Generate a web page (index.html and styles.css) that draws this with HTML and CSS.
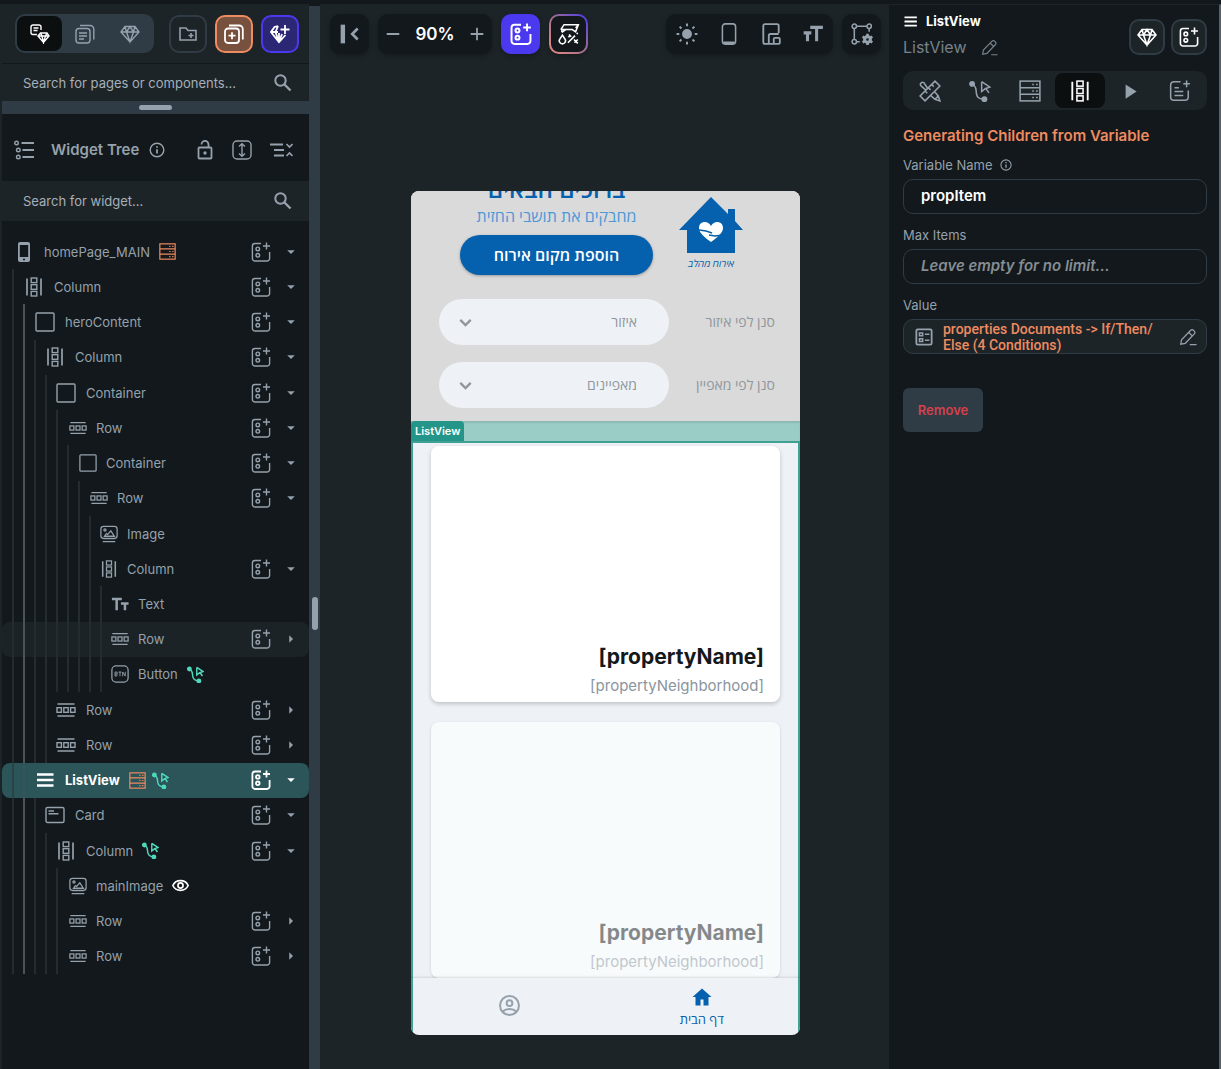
FILE: index.html
```html
<!DOCTYPE html>
<html lang="en">
<head>
    <meta charset="UTF-8">
    <meta name="viewport" content="width=device-width, initial-scale=1.0">
    <title>homePage_MAIN</title>
    <link rel="stylesheet" href="styles.css">
</head>
<body>
    <svg class="sprite" aria-hidden="true">
        <symbol id="i-search" viewBox="0 0 20 20"><circle cx="7.5" cy="7.5" r="5.2" stroke-width="2"/><path d="M11.5 11.5l6 6" stroke-width="2.4"/></symbol>
        <symbol id="i-add" viewBox="0 0 20 20"><path d="M10 1.500H4A2.600 2.600 0 0 0 1.400 4.100v12.300A2.600 2.600 0 0 0 4 19h12a2.600 2.600 0 0 0 2.600-2.600V10M15.500 .5v7M12 4h7"/><circle cx="6.800" cy="6.900" r="1.800"/><circle cx="6.800" cy="13.300" r="1.800"/></symbol>
        <symbol id="i-gem" viewBox="0 0 20 20"><path d="M5 2.500h10l4 5.500-9 10L1 8zM1 8h18M5 2.500L6.500 8 10 18l3.500-10L15 2.500M6.500 8L10 2.500 13.500 8"/></symbol>
        <symbol id="i-gemplus" viewBox="0 0 20 20"><path d="M8 2L4.500 3 1 8l8 10 6.500-7M1 8h7M8 2L5.500 8 9 18V9M9 18l3-8M15 1v9M10.500 5.500h9"/></symbol>
        <symbol id="i-pages" viewBox="0 0 20 20"><rect x="1" y="4.500" width="14" height="14.500" rx="3"/><path d="M5 1.500h10A3.500 3.500 0 0 1 18.800 5v10.500M4 9h8M4 12h8M4 15h5"/></symbol>
        <symbol id="i-pagesplus" viewBox="0 0 20 20"><rect x="1" y="4.500" width="14" height="14.500" rx="3"/><path d="M5 1.500h10A3.500 3.500 0 0 1 18.800 5v10.500M4.500 11.700h7M8 8.200v7"/></symbol>
        <symbol id="i-pagegem" viewBox="0 0 20 20"><path d="M11 6V3a2 2 0 0 0-2-2H3a2 2 0 0 0-2 2v5.500a2 2 0 0 0 2 2h4M3.500 4h5M3.500 6.500h4M10.500 9h6.500l2 3-5.500 6.500L8 12zM8 12h11M10.500 9l1.500 3 1.500 6.500 2-6.500L17 9"/></symbol>
        <symbol id="i-folder" viewBox="0 0 20 20"><path d="M2 4h6l2 2.500h8v9.500H2zM13 9v5M10.500 11.500h5"/></symbol>
        <symbol id="i-tree" viewBox="0 0 20 20"><circle cx="2.500" cy="3" r="1.800"/><circle cx="4.300" cy="10" r="1.800"/><circle cx="4.300" cy="17" r="1.800"/><path d="M7.500 3H20M8.500 10H20M8.500 17H20" stroke-width="1.800"/></symbol>
        <symbol id="i-info" viewBox="0 0 20 20"><circle cx="10" cy="10" r="8.500" stroke-width="1.800"/><path d="M10 9v5.500M10 5.200v2" stroke-width="2.200"/></symbol>
        <symbol id="i-lock" viewBox="0 0 20 20"><rect x="3.500" y="7.500" width="13" height="11" rx="1" stroke-width="1.800"/><path d="M6.500 4.500a3.500 3.500 0 0 1 7-.2v3" stroke-width="1.800"/><circle cx="10" cy="13" r="1" fill="currentColor"/></symbol>
        <symbol id="i-expand" viewBox="0 0 20 20"><rect x="1" y="1" width="18" height="18" rx="4"/><path d="M10 4v12M7 6.500L10 3.800l3 2.700M7 13.500l3 2.700 3-2.700"/></symbol>
        <symbol id="i-collapse" viewBox="0 0 24 20"><path d="M1 4.500h13M5 10h10M5 15.500h10" stroke-width="2"/><path d="M17.500 4l3 3 3-3M17.500 16l3-3 3 3" stroke-width="1.700"/></symbol>
        <symbol id="i-phone" viewBox="0 0 20 20"><path d="M6 0h8a2 2 0 0 1 2 2v16a2 2 0 0 1-2 2H6a2 2 0 0 1-2-2V2a2 2 0 0 1 2-2zm-.200 3v12h8.400V3zM9 16.800v1.400h2v-1.400z" fill="currentColor" stroke="none" fill-rule="evenodd"/></symbol>
        <symbol id="i-column" viewBox="0 0 20 20"><path d="M3 1.500v17M17 1.500v17" stroke-width="1.700"/><rect x="7.200" y="1" width="5.600" height="4.600"/><rect x="7.200" y="7.700" width="5.600" height="4.600"/><rect x="7.200" y="14.400" width="5.600" height="4.600"/></symbol>
        <symbol id="i-row" viewBox="0 0 20 20"><path d="M1.500 4h17M1.500 16h17" stroke-width="1.500"/><rect x="1" y="7.700" width="4.400" height="4.600"/><rect x="7.800" y="7.700" width="4.400" height="4.600"/><rect x="14.600" y="7.700" width="4.400" height="4.600"/></symbol>
        <symbol id="i-container" viewBox="0 0 20 20"><rect x="1" y="1" width="18" height="18" rx="1"/></symbol>
        <symbol id="i-image" viewBox="0 0 20 20"><rect x="1" y="1.500" width="18" height="13.500" rx="3"/><path d="M3 18.500h14M5 12.500h11l-4-6-3.500 4-1.500-1z"/><circle cx="5.500" cy="5.500" r="1.200"/></symbol>
        <symbol id="i-text" viewBox="0 0 20 20"><path d="M1 4.500h11M6.300 4.500V17M11 9.500h8.500M15.500 9.500V17" stroke-width="2.800"/></symbol>
        <symbol id="i-button" viewBox="0 0 20 20"><rect x="1" y="1" width="18" height="18" rx="4.500"/><path d="M4.500 7.800v4.500H6a1.200 1.200 0 0 0 0-2.300 1.100 1.100 0 0 0 0-2.200zM4.500 10H6M8.300 7.800h3.400M10 7.800v4.700M13 12.500V7.800l2.800 4.500V7.600" stroke-width="1"/></symbol>
        <symbol id="i-list" viewBox="0 0 20 20"><path d="M2 4.500h16.500M2 10h16.500M2 15.500h16.500" stroke-width="2.500"/></symbol>
        <symbol id="i-card" viewBox="0 0 20 20"><rect x="1" y="2.500" width="18" height="15" rx="1.500"/><path d="M3.500 6h5.500M3.500 8.800h10"/></symbol>
        <symbol id="i-db" viewBox="0 0 20 20"><rect x="1" y="1" width="18" height="18"/><path d="M1 7h18M1 13h18M12 4h1.500M15.500 4H17M12 10h1.500M15.500 10H17M12 16h1.500M15.500 16H17"/></symbol>
        <symbol id="i-action" viewBox="0 0 20 20"><circle cx="2.800" cy="3.500" r="2" fill="currentColor"/><circle cx="14" cy="17.500" r="2" fill="currentColor"/><path d="M3 4c4.500 2 3 5 3.800 8.500C7.500 16 9 17 13 17.500M11.500 1.500l7.500 5-3.800 1.200 3 4M15.200 7.700l-3.700 2.800v-9"/></symbol>
        <symbol id="i-eye" viewBox="0 0 20 20"><path d="M1 10c3.500-7.500 14.500-7.500 18 0-3.500 7.500-14.500 7.500-18 0z" stroke-width="2"/><circle cx="10" cy="10" r="3" stroke-width="2"/></symbol>
        <symbol id="i-first" viewBox="0 0 20 20"><path d="M3.500 1.500v17" stroke-width="4"/><path d="M17 5l-5 5 5 5" stroke-width="2.400"/></symbol>
        <symbol id="i-minus" viewBox="0 0 20 20"><path d="M3 10h14" stroke-width="2.200"/></symbol>
        <symbol id="i-plus" viewBox="0 0 20 20"><path d="M3 10h14M10 3v14" stroke-width="2"/></symbol>
        <symbol id="i-tools" viewBox="0 0 20 20"><path d="M2.500 6L5.500 1.500H18.500L16 8 13 6H3.500V8.500M3.500 8.500L7 6M16 4.500L18.500 1.500M4 11l-2.300 3.500a2.800 2.800 0 1 0 4.600 0zM9 18l6.500-6.500M17 10l1-1M10 10.500l2 2M14.500 15l3.500 3.500M9.500 13l2-2M15 18l3-3"/></symbol>
        <symbol id="i-sun" viewBox="0 0 20 20"><circle cx="10" cy="10" r="3.800" fill="currentColor"/><path d="M10 .5v2.500M10 17v2.500M.5 10H3M17 10h2.500M3.300 3.300L5 5M15 15l1.700 1.700M3.300 16.700L5 15M15 5l1.700-1.700" stroke-width="1.800"/></symbol>
        <symbol id="i-mobile" viewBox="0 0 20 20"><rect x="4" y=".8" width="12" height="18.400" rx="2.500"/><path d="M5 18h10" stroke-width="2.400"/></symbol>
        <symbol id="i-devices" viewBox="0 0 20 20"><path d="M8 19H4.500A1.500 1.500 0 0 1 3 17.500v-15A1.500 1.500 0 0 1 4.500 1h11A1.500 1.500 0 0 1 17 2.500V9M8 19v-7.500A1.500 1.500 0 0 1 9.500 10H17M8 19h4.500M12.500 19v-4.500a1 1 0 0 1 1-1H17a1 1 0 0 1 1 1V18a1 1 0 0 1-1 1z" stroke-width="1.700"/></symbol>
        <symbol id="i-textsize" viewBox="0 0 20 20"><path d="M7.500 4H19M13.300 4v12.500M1.500 9h7M5 9v7.500" stroke-width="2.800"/></symbol>
        <symbol id="i-frame" viewBox="0 0 20 20"><circle cx="3" cy="3" r="2"/><circle cx="16.500" cy="3" r="2"/><circle cx="3" cy="17" r="2"/><path d="M5 3h9.500M3 5v10M16.500 5v3M5 17h3"/><circle cx="15" cy="15" r="2.600" stroke-width="2.800"/><path d="M15 9.800v2M15 18.200v2M10.500 12.400l1.800 1M17.700 16.600l1.800 1M10.500 17.600l1.800-1M17.700 13.400l1.800-1" stroke-width="2.400"/></symbol>
        <symbol id="i-edit" viewBox="0 0 20 20"><path d="M2 18l.8-5L13 2.500a2 2 0 0 1 3 0l1 1a2 2 0 0 1 0 3L7 17zM11 5l4 4M12 18.500h7.500"/></symbol>
        <symbol id="i-design" viewBox="0 0 20 20"><path d="M14.500 1l4.500 4.500L5.500 19 1 14.500zM11.500 4l2 2M8.500 7l2 2M5.500 10l2 2M7.500 7L4.500 2.500A2 2 0 0 0 1.500 5L6 9M14 10.500l3.500 4L19 19l-4.500-1.500-4-3.500M14.500 17.500l3-3"/></symbol>
        <symbol id="i-play" viewBox="0 0 20 20"><path d="M6 4l10 6.500L6 17z" fill="currentColor" stroke="none"/></symbol>
        <symbol id="i-note" viewBox="0 0 20 20"><path d="M10.500 1.500H4.500a3 3 0 0 0-3 3v11a3 3 0 0 0 3 3h10a3 3 0 0 0 3-3V9.500M16 .5v6M13 3.500h6M5 7h4M5 10.500h8M5 14h8"/></symbol>
        <symbol id="i-form" viewBox="0 0 20 20"><rect x="1.500" y="1.500" width="17" height="17" rx="1.500" stroke-width="2"/><path d="M5 5.500h3.500v3H5zM5 12h3.500v3H5zM11 7h5M11 13.500h5" stroke-width="1.700"/></symbol>
        <symbol id="i-chevron" viewBox="0 0 20 20"><path d="M2 6l8 8 8-8" stroke-width="3.600"/></symbol>
        <symbol id="i-down" viewBox="0 0 20 20"><path d="M2.500 6.500h15L10 14z" fill="currentColor" stroke="none"/></symbol>
        <symbol id="i-right" viewBox="0 0 20 20"><path d="M6.500 2.500L14 10l-7.500 7.500z" fill="currentColor" stroke="none"/></symbol>
        <symbol id="i-user" viewBox="0 0 20 20"><circle cx="10" cy="10" r="9" stroke-width="1.900"/><circle cx="10" cy="7.800" r="2.700" stroke-width="1.900"/><path d="M3.500 15.800c3.500-3.300 9.500-3.300 13 0" stroke-width="1.900"/></symbol>
        <symbol id="i-home" viewBox="0 0 20 20"><path d="M10 1.500L.5 10H3.500v8.500h5v-6h3v6h5V10h3z" fill="currentColor" stroke="none"/></symbol>
    </svg>

    <div class="app">
        <aside class="sidebar">
            <div class="toolbar">
                <div class="segmented">
                    <button class="active" aria-label="Tree"><svg><use href="#i-pagegem"/></svg></button>
                    <button aria-label="Pages"><svg><use href="#i-pages"/></svg></button>
                    <button aria-label="Components"><svg><use href="#i-gem"/></svg></button>
                </div>
                <div class="tool-actions">
                    <button class="tool" aria-label="Add folder"><svg><use href="#i-folder"/></svg></button>
                    <button class="tool orange" aria-label="Add page"><svg><use href="#i-pagesplus"/></svg></button>
                    <button class="tool purple" aria-label="Add component"><svg><use href="#i-gemplus"/></svg></button>
                </div>
            </div>
            <label class="search">
                <input type="text" placeholder="Search for pages or components..." aria-label="Search for pages or components">
                <svg><use href="#i-search"/></svg>
            </label>
            <div class="drag-bar"><span></span></div>
            <div class="tree-header">
                <svg class="tree-icon"><use href="#i-tree"/></svg>
                <h2>Widget Tree</h2>
                <svg class="info"><use href="#i-info"/></svg>
                <div class="tree-tools">
                    <button aria-label="Unlock"><svg><use href="#i-lock"/></svg></button>
                    <button aria-label="Expand"><svg><use href="#i-expand"/></svg></button>
                    <button aria-label="Collapse"><svg class="wide"><use href="#i-collapse"/></svg></button>
                </div>
            </div>
            <label class="search widget-search">
                <input type="text" placeholder="Search for widget..." aria-label="Search for widget">
                <svg><use href="#i-search"/></svg>
            </label>
            <ul class="tree" id="tree"></ul>
        </aside>

        <div class="splitter"><span></span></div>

        <main class="canvas">
            <div class="canvas-bar">
                <div class="group">
                    <button aria-label="Collapse panel"><svg><use href="#i-first"/></svg></button>
                </div>
                <div class="group zoom">
                    <button aria-label="Zoom out"><svg><use href="#i-minus"/></svg></button>
                    <span>90%</span>
                    <button aria-label="Zoom in"><svg><use href="#i-plus"/></svg></button>
                </div>
                <div class="group add">
                    <button aria-label="Add widget"><svg><use href="#i-add"/></svg></button>
                </div>
                <div class="group gradient">
                    <button aria-label="Generate"><svg><use href="#i-tools"/></svg></button>
                </div>
                <div class="group push">
                    <button aria-label="Theme"><svg><use href="#i-sun"/></svg></button>
                    <button aria-label="Phone"><svg><use href="#i-mobile"/></svg></button>
                    <button aria-label="Devices"><svg><use href="#i-devices"/></svg></button>
                    <button aria-label="Text size"><svg><use href="#i-textsize"/></svg></button>
                </div>
                <div class="group">
                    <button aria-label="Frame settings"><svg><use href="#i-frame"/></svg></button>
                </div>
            </div>

            <div class="phone" dir="rtl" lang="he">
                <section class="hero">
                    <div class="hero-top">
                        <div class="logo">
                            <svg viewBox="0 0 64 56">
                                <path d="M32 0l17 17v-5h7v12l8 9h-8v23H8V33H0z" fill="#0561ad"/>
                                <path d="M32 45C22 38 20 34 20 31c0-7 9-8 12-2 3-6 12-5 12 2 0 3-2 7-12 14z" fill="#fff"/>
                                <path d="M20 33l7 1 6 2M44 38l-8 1-6-1" fill="none" stroke="#0561ad" stroke-width="1.500"/>
                            </svg>
                            <em>אירוח מהלב</em>
                        </div>
                        <div class="welcome">
                            <h1>ברוכים הבאים</h1>
                            <p>מחבקים את תושבי החזית</p>
                            <button>הוספת מקום אירוח</button>
                        </div>
                    </div>
                    <div class="filter">
                        <label for="area">סנן לפי איזור</label>
                        <div class="select">
                            <select id="area"><option>איזור</option></select>
                            <svg><use href="#i-chevron"/></svg>
                        </div>
                    </div>
                    <div class="filter">
                        <label for="feature">סנן לפי מאפיין</label>
                        <div class="select">
                            <select id="feature"><option>מאפיינים</option></select>
                            <svg><use href="#i-chevron"/></svg>
                        </div>
                    </div>
                </section>
                <div class="strip"><span dir="ltr">ListView</span></div>
                <section class="list" dir="ltr">
                    <article class="card">
                        <h3>[propertyName]</h3>
                        <p>[propertyNeighborhood]</p>
                    </article>
                    <article class="card faded">
                        <h3>[propertyName]</h3>
                        <p>[propertyNeighborhood]</p>
                    </article>
                </section>
                <nav class="bottom-nav">
                    <a href="#" class="current"><svg><use href="#i-home"/></svg>דף הבית</a>
                    <a href="#" aria-label="פרופיל"><svg class="user"><use href="#i-user"/></svg></a>
                </nav>
            </div>
        </main>

        <aside class="props">
            <header class="props-header">
                <div class="names">
                    <div class="type"><svg><use href="#i-list"/></svg>ListView</div>
                    <div class="name">ListView <svg><use href="#i-edit"/></svg></div>
                </div>
                <button class="tool" aria-label="Wrap in component"><svg><use href="#i-gem"/></svg></button>
                <button class="tool" aria-label="Add child"><svg><use href="#i-add"/></svg></button>
            </header>
            <div class="tabs">
                <button aria-label="Properties"><svg><use href="#i-design"/></svg></button>
                <button aria-label="Actions"><svg><use href="#i-action"/></svg></button>
                <button aria-label="Backend query"><svg><use href="#i-db"/></svg></button>
                <button class="active" aria-label="Generate children"><svg><use href="#i-column"/></svg></button>
                <button aria-label="Animations"><svg><use href="#i-play"/></svg></button>
                <button aria-label="Documentation"><svg><use href="#i-note"/></svg></button>
            </div>
            <h2>Generating Children from Variable</h2>
            <label class="field-label" for="varName">Variable Name <svg><use href="#i-info"/></svg></label>
            <input class="field" type="text" id="varName" value="propItem">
            <label class="field-label" for="maxItems">Max Items</label>
            <input class="field" type="text" id="maxItems" placeholder="Leave empty for no limit...">
            <div class="field-label">Value</div>
            <button class="field value">
                <svg><use href="#i-form"/></svg>
                <span>properties Documents -&gt; If/Then/<wbr>Else (4 Conditions)</span>
                <svg class="edit"><use href="#i-edit"/></svg>
            </button>
            <button class="remove">Remove</button>
        </aside>
    </div>

    <script src="script.js"></script>
</body>
</html>
```

FILE: styles.css
```css
:root {
    --bg: #12181b;
    --panel: #1d2428;
    --line: #303c45;
    --black: #0b0f10;
    --text: #95a1ac;
    --orange: #ee8b60;
    --teal: #4fd8bb;
    --purple: #4b39ef;
    --blue: #0561ad;
    --font: Inter, "Noto Sans", sans-serif;
    --hebrew: "Open Sans", "Noto Sans", "DejaVu Sans", sans-serif;
}
* {
    box-sizing: border-box;
}
body {
    margin: 0;
    background: var(--bg);
    color: var(--text);
    font-family: var(--font);
    font-size: 13px;
    line-height: 16px;
}
h1, h2, h3, p, ul {
    margin: 0;
    padding: 0;
}
button, input, select {
    font: inherit;
    color: inherit;
    border: 0;
    background: none;
    padding: 0;
}
button {
    display: flex;
    align-items: center;
    justify-content: center;
    cursor: pointer;
}
svg {
    width: 20px;
    height: 20px;
    flex: none;
    fill: none;
    stroke: currentColor;
    stroke-width: 1.4px;
}
.sprite {
    position: absolute;
    width: 0;
    height: 0;
}
.app {
    display: grid;
    grid-template-columns: 309px 11px 1fr 332px;
    min-height: 100vh;
    border-top: 4px solid var(--bg);
}

/* sidebar */
.sidebar {
    display: flex;
    flex-direction: column;
    border-left: 2px solid var(--panel);
}
.toolbar {
    display: flex;
    justify-content: space-between;
    align-items: center;
    height: 60px;
    padding: 0 10px 0 13px;
    background: var(--panel);
    border-bottom: 1px solid var(--bg);
}
.segmented {
    display: flex;
    height: 39px;
    border: 2px solid var(--line);
    border-radius: 10px;
    background: var(--line);
}
.segmented button {
    width: 45px;
    border-radius: 8px;
}
.segmented .active {
    background: var(--black);
    color: #fff;
}
.tool-actions {
    display: flex;
    gap: 8px;
}
.tool {
    width: 38px;
    height: 38px;
    border: 2px solid var(--line);
    border-radius: 10px;
}
.tool.orange {
    background: #77503e;
    border-color: var(--orange);
    color: #fff;
}
.tool.purple {
    background: #2c2775;
    border-color: var(--purple);
    color: #fff;
}
.tool.orange svg, .tool.purple svg {
    stroke-width: 1.8px;
}
.search {
    display: flex;
    align-items: center;
    height: 37px;
    padding: 0 16px 0 21px;
    background: var(--panel);
}
.search input {
    flex: 1;
    min-width: 0;
    outline: none;
}
.search input::placeholder {
    color: #a5b0b9;
}
.drag-bar {
    display: flex;
    justify-content: center;
    align-items: center;
    height: 13px;
    background: var(--line);
}
.drag-bar span {
    width: 33px;
    height: 5px;
    border-radius: 3px;
    background: var(--text);
}
.tree-header {
    display: flex;
    align-items: center;
    height: 67px;
    padding: 4px 16px 0 12px;
}
.tree-header h2 {
    margin: 0 10px 0 17px;
    font-size: 15px;
    font-weight: 600;
}
.tree-header .info {
    width: 16px;
    height: 16px;
}
.tree-tools {
    display: flex;
    gap: 17px;
    margin-left: auto;
}
.tree-tools .wide {
    width: 24px;
}
.widget-search {
    height: 40px;
}
.tree {
    display: grid;
    grid-auto-rows: 1fr;
    height: 740px;
    margin-top: 13px;
    list-style: none;
}
.tree li {
    position: relative;
    display: flex;
    align-items: center;
    padding-right: 13px;
    border-radius: 8px;
}
.tree .guides {
    position: absolute;
    left: 10px;
    top: 0;
    bottom: 0;
    display: flex;
}
.tree .guides i {
    width: 11px;
    border-left: 2px solid #252c30;
}
.tree .guides i:nth-child(2) {
    border-color: #4a5358;
}
.tree .node {
    display: flex;
    align-items: center;
    gap: 9px;
}
.tree .node > svg {
    margin-right: 1px;
}
.tree .node.deep > svg {
    width: 18px;
    height: 18px;
    margin: 0 0 0 3px;
}
.tree .badge {
    display: flex;
    gap: 6px;
}
.tree .badge svg {
    width: 17px;
    height: 17px;
}
.badge .db {
    color: var(--orange);
}
.badge .action {
    color: var(--teal);
    stroke-width: 1.7px;
}
.badge .eye {
    color: #fff;
}
.tree .row-tools {
    display: flex;
    align-items: center;
    gap: 15px;
    margin-left: auto;
}
.tree .row-tools .arrow {
    width: 10px;
    height: 10px;
}
.tree .hovered {
    background: #1c2327;
}
.tree .selected {
    background: #2b5558;
    color: #fff;
    font-weight: 700;
}
.selected .row-tools svg {
    stroke-width: 1.8px;
}
.selected .guides {
    opacity: 0.4;
}

.splitter {
    display: flex;
    justify-content: center;
    align-items: center;
    padding-top: 152px;
    margin-top: 2px;
    background: var(--line);
}
.splitter span {
    width: 6px;
    height: 33px;
    border-radius: 3px;
    background: var(--text);
}

/* canvas */
.canvas {
    background: var(--panel);
    padding: 10px 8px 34px 10px;
}
.canvas-bar {
    display: flex;
    gap: 9px;
}
.group {
    display: flex;
    align-items: center;
    justify-content: center;
    height: 40px;
    min-width: 39px;
    border-radius: 10px;
    background: var(--bg);
    box-shadow: 0 2px 5px rgba(0,0,0,0.3);
}
.group svg {
    width: 22px;
    height: 22px;
}
.zoom {
    width: 114px;
    justify-content: space-around;
    font-size: 17px;
    font-weight: 600;
    color: #fff;
}
.zoom svg {
    width: 18px;
    height: 18px;
    color: var(--text);
}
.add {
    background: var(--purple);
    color: #fff;
}
.add svg {
    stroke-width: 1.8px;
}
.gradient {
    border: 2px solid transparent;
    background: linear-gradient(var(--bg), var(--bg)) padding-box, linear-gradient(45deg, #ee8b80, #a0708f, #4b39ef) border-box;
    color: #fff;
}
.push {
    gap: 20px;
    padding: 0 9px 0 10px;
    margin-left: auto;
}

.phone {
    display: flex;
    flex-direction: column;
    width: 389px;
    margin: 137px auto 0;
    overflow: hidden;
    border-radius: 8px;
    background: #eef2f6;
    font-family: var(--hebrew);
}
.hero {
    height: 230px;
    padding: 0 25px;
    background: #dadada;
    color: #8f979c;
    font-size: 14px;
}
.hero-top {
    display: flex;
    height: 108px;
    padding-right: 32px;
    gap: 26px;
}
.logo {
    display: flex;
    flex-direction: column;
    align-items: center;
    width: 64px;
    padding-top: 6px;
    color: var(--blue);
    font-size: 10px;
    line-height: 20px;
}
.logo svg {
    width: 64px;
    height: 56px;
    stroke: none;
}
.welcome {
    display: flex;
    flex-direction: column;
    align-items: center;
    width: 193px;
    color: #4c98d8;
    font-size: 16px;
    line-height: 22px;
    white-space: nowrap;
}
.welcome h1 {
    margin-top: -18px;
    font-size: 24px;
    line-height: 32px;
    font-weight: 600;
    color: var(--blue);
}
.welcome button {
    width: 100%;
    height: 40px;
    margin-top: 8px;
    border-radius: 20px;
    background: var(--blue);
    color: #fff;
    font-size: 16px;
    font-weight: 600;
    box-shadow: 0 1px 3px rgba(0,0,0,0.3);
}
.filter {
    display: flex;
    align-items: center;
    justify-content: space-between;
    margin-bottom: 17px;
}
.select {
    position: relative;
    width: 230px;
    margin-left: 3px;
}
.select select {
    width: 100%;
    height: 46px;
    padding: 0 32px;
    border-radius: 23px;
    background: #eef2f6;
    appearance: none;
}
.select svg {
    position: absolute;
    left: 20px;
    top: 17px;
    width: 13px;
    height: 13px;
}
.strip {
    display: flex;
    justify-content: flex-end;
    height: 20px;
    background: #9bcdc7;
    box-shadow: inset 0 2px 2px rgba(0,0,0,0.1);
}
.strip span {
    padding: 0 4px;
    border-radius: 4px 4px 0 0;
    background: #249689;
    color: #fff;
    font-family: var(--font);
    font-size: 11px;
    font-weight: 600;
    line-height: 21px;
}
.list {
    display: flex;
    flex-direction: column;
    gap: 20px;
    height: 537px;
    padding: 3px 18px 0;
    overflow: hidden;
    border: 2px solid #3fa093;
    border-bottom: 0;
    font-family: Inter, sans-serif;
    text-align: right;
}
.card {
    display: flex;
    flex-direction: column;
    justify-content: flex-end;
    flex: none;
    height: 256px;
    padding: 0 16px 7px;
    border-radius: 8px;
    background: #fff;
    font-size: 15px;
    line-height: 18px;
    box-shadow: 0 2px 4px rgba(0,0,0,0.2);
}
.card h3 {
    margin-bottom: 6px;
    font-size: 21px;
    font-weight: 700;
    line-height: 28px;
    color: #14181b;
}
.card p {
    color: #8a959e;
}
.card.faded {
    background: #f8fbfc;
    box-shadow: 0 1px 3px rgba(0,0,0,0.15);
}
.faded h3, .faded p {
    opacity: 0.5;
}
.bottom-nav {
    display: flex;
    height: 57px;
    border: 1px solid #3fa093;
    border-width: 0 2px;
    box-shadow: 0 -1px 2px rgba(0,0,0,0.12);
}
.bottom-nav a {
    flex: 1;
    display: flex;
    flex-direction: column;
    align-items: center;
    justify-content: center;
    gap: 2px;
    padding-top: 2px;
    color: #95a1ac;
    text-decoration: none;
    line-height: 20px;
}
.bottom-nav .current {
    color: var(--blue);
}
.bottom-nav .user {
    width: 21px;
    height: 21px;
    margin-bottom: 4px;
}

/* right panel */
.props {
    padding: 8px 12px 0 14px;
    border-top: 1px solid var(--panel);
    border-right: 2px solid #596167;
}
.props-header {
    display: flex;
    gap: 4px;
    height: 58px;
}
.names {
    flex: 1;
    display: flex;
    flex-direction: column;
    gap: 7px;
}
.type {
    display: flex;
    align-items: center;
    gap: 8px;
    color: #fff;
    font-weight: 700;
}
.type svg {
    width: 15px;
    height: 15px;
}
.name {
    display: flex;
    align-items: center;
    gap: 14px;
    font-size: 16px;
    line-height: 22px;
    color: #77828a;
}
.name svg {
    width: 17px;
    height: 17px;
}
.props .tool {
    width: 36px;
    height: 36px;
    margin-top: 6px;
    margin-left: 2px;
    background: var(--panel);
    color: #fff;
}
.tool svg {
    stroke-width: 1.6px;
}
.tabs {
    display: flex;
    height: 39px;
    padding: 2px;
    border-radius: 10px;
    background: var(--panel);
}
.tabs button {
    flex: 1;
    border-radius: 8px;
}
.tabs svg {
    width: 22px;
    height: 22px;
}
.tabs .active {
    background: var(--black);
    color: #fff;
}
.props h2 {
    margin: 16px 0 11px;
    font-size: 15px;
    line-height: 20px;
    font-weight: 600;
    color: var(--orange);
}
.field-label {
    display: flex;
    align-items: center;
    gap: 7px;
    height: 16px;
}
.field-label svg {
    width: 12px;
    height: 12px;
}
.field {
    display: block;
    width: 100%;
    height: 35px;
    margin: 6px 0 13px;
    padding: 0 17px 3px;
    border: 1px solid var(--line);
    border-radius: 10px;
    color: #fff;
    font-size: 15px;
    font-weight: 600;
}
.field::placeholder {
    color: #858d93;
    font-style: italic;
}
.field.value {
    display: flex;
    gap: 10px;
    padding: 0 9px 0 11px;
    background: var(--panel);
    color: var(--orange);
    font-family: Roboto, sans-serif;
    font-size: 14px;
    font-weight: 500;
    text-align: left;
}
.value span {
    flex: 1;
}
.value svg {
    width: 18px;
    height: 18px;
    color: var(--text);
}
.remove {
    width: 80px;
    height: 44px;
    margin-top: 34px;
    border-radius: 6px;
    background: var(--line);
    color: #d5404c;
    font-weight: 600;
}
```

FILE: script.js
```javascript
// depth, icon, label, arrow (down / right / none), badges, state
const nodes = [
    [0, 'phone', 'homePage_MAIN', 'down', ['db']],
    [1, 'column', 'Column', 'down'],
    [2, 'container', 'heroContent', 'down'],
    [3, 'column', 'Column', 'down'],
    [4, 'container', 'Container', 'down'],
    [5, 'row', 'Row', 'down'],
    [6, 'container', 'Container', 'down'],
    [7, 'row', 'Row', 'down'],
    [8, 'image', 'Image', ''],
    [8, 'column', 'Column', 'down'],
    [9, 'text', 'Text', ''],
    [9, 'row', 'Row', 'right', [], 'hovered'],
    [9, 'button', 'Button', '', ['action']],
    [4, 'row', 'Row', 'right'],
    [4, 'row', 'Row', 'right'],
    [2, 'list', 'ListView', 'down', ['db', 'action'], 'selected'],
    [3, 'card', 'Card', 'down'],
    [4, 'column', 'Column', 'down', ['action']],
    [5, 'image', 'mainImage', '', ['eye']],
    [5, 'row', 'Row', 'right'],
    [5, 'row', 'Row', 'right']
];

const icon = (name, cls = '') => `<svg class="${cls}"><use href="#i-${name}"/></svg>`;

document.getElementById('tree').innerHTML = nodes.map(([depth, type, label, arrow, badges = [], state = '']) => `
    <li class="${state}" style="padding-left: ${Math.round(12 + depth * 10.4)}px">
        <span class="guides">${'<i></i>'.repeat(depth)}</span>
        <span class="node ${depth > 4 ? 'deep' : ''}">
            ${icon(type)}
            <span>${label}</span>
            <span class="badge">${badges.map(b => icon(b, b)).join('')}</span>
        </span>
        ${arrow ? `<span class="row-tools">${icon('add')}${icon(arrow, 'arrow')}</span>` : ''}
    </li>`).join('');
```
